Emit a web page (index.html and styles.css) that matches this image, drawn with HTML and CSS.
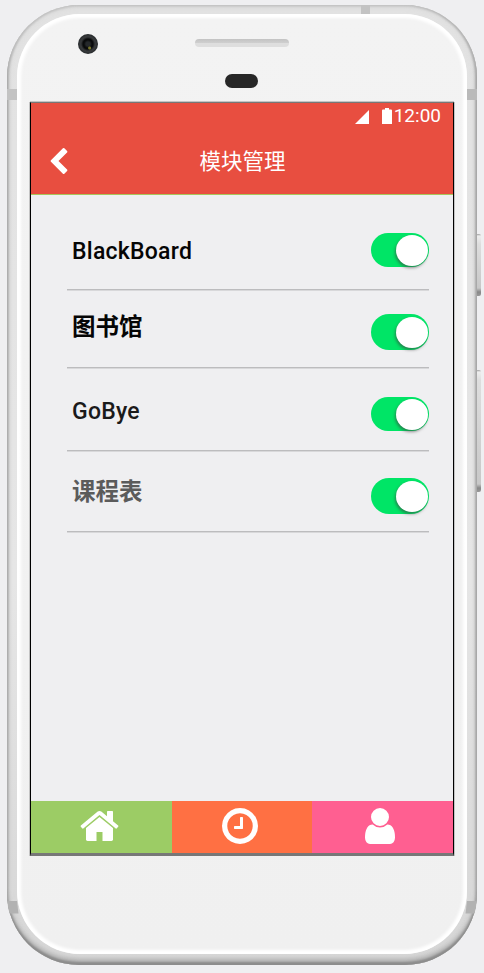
FILE: index.html
```html
<!DOCTYPE html>
<html lang="zh-CN">
<head>
<meta charset="utf-8">
<title>模块管理</title>
<link rel="stylesheet" href="styles.css">
</head>
<body>
<div class="phone">
  <span class="key power"></span>
  <span class="key volume"></span>
  <span class="seam seam-top"></span>
  <span class="seam seam-tl"></span>
  <span class="seam seam-tr"></span>
  <svg class="seam-low low-l" viewBox="0 0 12 13"><path d="M.500 0H10L11.500 12.500H2.500Q.500 6 .500 0Z"/></svg>
  <svg class="seam-low low-r" viewBox="0 0 12 13"><path d="M11.500 0H2L.5 12.500H9.500Q11.500 6 11.500 0Z"/></svg>
  <div class="face">
    <div class="forehead">
      <span class="camera"></span>
      <span class="speaker"></span>
      <span class="sensor"></span>
    </div>
    <div class="screen">
      <header>
        <div class="status">
          <svg class="signal" viewBox="0 0 14 14"><path d="M14 0V14H0Z"/></svg>
          <svg class="battery" viewBox="0 0 10 16"><path d="M3 0H7V1.500H9Q10 1.500 10 2.500V16H0V2.500Q0 1.500 1 1.500H3Z"/></svg>
          <span>12:00</span>
        </div>
        <div class="titlebar">
          <svg class="back" viewBox="154 26 1036 1612"><path d="M1171 301L640 832l531 531q19 19 19 45t-19 45l-166 166q-19 19-45 19t-45-19L173 877q-19-19-19-45t19-45L915 45q19-19 45-19t45 19l166 166q19 19 19 45t-19 45z"/></svg>
          <h1>模块管理</h1>
        </div>
      </header>
      <main>
        <div class="row r1"><span class="label">BlackBoard</span><span class="toggle"><i></i></span></div>
        <div class="row r2"><span class="label cjk">图书馆</span><span class="toggle tall"><i></i></span></div>
        <div class="row r3"><span class="label dark">GoBye</span><span class="toggle"><i></i></span></div>
        <div class="row r4"><span class="label cjk muted">课程表</span><span class="toggle tall"><i></i></span></div>
      </main>
      <nav>
        <a class="home"><svg viewBox="0 0 1664 1792"><path d="M1408 992v480q0 26-19 45t-45 19H960v-384H704v384H320q-26 0-45-19t-19-45V992q0-1 .5-3t.5-3l575-474 575 474q1 2 1 6zm223-69l-62 74q-8 9-21 11h-3q-13 0-21-7L832 424l-692 577q-12 8-24 7-13-2-21-11l-62-74q-8-10-7-23.500T37 878l719-599q32-26 76-26t76 26l244 204V288q0-14 9-23t23-9h192q14 0 23 9t9 23v408l219 182q10 8 11 21.500t-7 23.500z"/></svg></a>
        <a class="clock"><svg viewBox="0 0 1792 1792"><path d="M1024 544v448q0 14-9 23t-23 9H672q-14 0-23-9t-9-23v-64q0-14 9-23t23-9h224V544q0-14 9-23t23-9h64q14 0 23 9t9 23zm416 352q0-148-73-273t-198-198-273-73-273 73-198 198-73 273 73 273 198 198 273 73 273-73 198-198 73-273zm224 0q0 209-103 385.500T1281.500 1561 896 1664t-385.500-103T231 1281.500 128 896t103-385.500T510.500 231 896 128t385.500 103T1561 510.500 1664 896z"/></svg></a>
        <a class="user"><svg viewBox="0 0 1792 1792"><path d="M1536 1399q0 109-62.500 187t-150.500 78H469q-88 0-150.500-78T256 1399q0-85 8.500-160.500t31.500-152 58.500-131 94-89T583 832q131 128 313 128t313-128q76 0 134.500 34.500t94 89 58.500 131 31.500 152 8.500 160.500zm-256-887q0 159-112.500 271.500T896 896 624.500 783.500 512 512t112.500-271.500T896 128t271.500 112.500T1280 512z"/></svg></a>
      </nav>
    </div>
  </div>
</div>
</body>
</html>
```
FILE: styles.css
```css
* { box-sizing: border-box; }
html, body { height: 100%; overflow: hidden; }
body {
  margin: 0;
  padding: 5px 7px 8px;
  background: #efeff1;
  font-family: Roboto, "Noto Sans CJK SC", sans-serif;
}
svg { display: block; fill: #fff; }

.phone {
  position: relative;
  width: 470px;
  height: 960px;
  padding: 9px 10px 11px;
  border-radius: 72px;
  background: linear-gradient(#e2e2e2, #e6e6e6 60%, #d6d6d6);
  box-shadow:
    inset 0 -3px 2px #8c8c8c,
    inset 0 -6px 4px #b0b0b0,
    inset 2px 0 2px #c0c0c0,
    inset -2px 0 2px #b4b4b4,
    inset 0 2px 2px #cfcfcf,
    inset 0 0 6px 1px #d4d4d4;
}
.face {
  height: 940px;
  padding: 0 13px;
  border-radius: 63px;
  background: linear-gradient(#f3f3f3, #f0f0f0);
  box-shadow: inset 0 0 3px 4px #fff;
}

.key {
  position: absolute;
  left: 470px;
  width: 4px;
  background: linear-gradient(#a0a0a0, #eee 2px, #dedede 10px, #c8c8c8 calc(100% - 8px), #888 calc(100% - 4px), #999);
  border-radius: 0 2px 2px 0;
}
.power { top: 229px; height: 62px; }
.volume { top: 365px; height: 122px; }
.seam { position: absolute; background: #c3c3c3; }
.seam-top { left: 354px; top: 0; width: 9px; height: 9px; }
.seam-tl { left: 0; top: 84px; width: 10px; height: 11px; }
.seam-tr { right: 0; top: 84px; width: 10px; height: 11px; background: #bababa; }
.seam-low { position: absolute; top: 896px; width: 12px; height: 13px; fill: #b2b2b2; }
.low-l { left: 0; }
.low-r { right: 0; }

.forehead {
  display: grid;
  grid-template-columns: 165px 94px 1fr;
  grid-template-rows: 21px 18px 48px;
  padding-top: 1px;
  height: 88px;
}
.camera {
  grid-column: 1;
  grid-row: 1 / 3;
  width: 20px;
  height: 20px;
  margin: 19px 0 0 48px;
  border-radius: 50%;
  background: radial-gradient(circle at 58% 70%, #77752b 0 1px, transparent 2px), radial-gradient(circle, #25282b 0 2px, #090a0b 4px 5px, #36383a 7px 8px, #25282a 10px);
}
.speaker {
  grid-column: 2;
  grid-row: 2;
  align-self: start;
  height: 8px;
  margin-top: 3px;
  border-radius: 4px;
  background: linear-gradient(#c3c3c3, #cecece 45%, #dedede 55%, #dedede);
}
.sensor {
  grid-column: 2;
  grid-row: 3;
  width: 33px;
  height: 14px;
  margin: 20px 0 0 30px;
  border-radius: 7px;
  background: #272727;
}

.screen {
  display: flex;
  flex-direction: column;
  width: 424px;
  height: 754px;
  border: solid #000;
  border-width: 1px 1px 3px;
  border-top-color: #777;
  border-bottom-color: #777;
  background: #efeff1;
  box-shadow: -1px 0 0 #c4c4c4, 1px 0 0 #c4c4c4, 0 -1px 0 #c4c4c4;
}
header {
  height: 92px;
  color: #fff;
  background: #e84e40;
  border-bottom: 1px solid #a8c65b;
}
.status {
  display: flex;
  height: 26px;
  padding: 0 12px 0 0;
  justify-content: flex-end;
  align-items: center;
  font-size: 19px;
  line-height: 26px;
}
.signal { width: 14px; height: 14px; margin: 2px 13px 0 0; }
.battery { width: 10px; height: 16px; margin: 0 2px 0 0; }
.titlebar {
  display: grid;
  grid-template-columns: 19px 18px 1fr 37px;
  height: 64px;
  align-items: center;
}
.back { grid-column: 2; width: 18px; height: 26px; }
h1 {
  grid-column: 3;
  margin: -3px 0 0 1px;
  font: 400 21.500px/30px "Noto Sans CJK SC", sans-serif;
  text-align: center;
}

main { flex: 1; padding: 0 24px 0 36px; }
.row {
  display: flex;
  justify-content: space-between;
  align-items: flex-start;
  padding-left: 5px;
  border-bottom: 1px solid #bcbcbe;
  box-shadow: 0 1px 0 #d8d8da;
}
.r1 { height: 95px; padding-top: 38px; }
.r2 { height: 78px; padding-top: 24px; }
.r3 { height: 83px; padding-top: 29px; }
.r4 { height: 81px; padding-top: 27px; }
.label { margin-top: 1px; font-size: 23px; font-weight: 500; line-height: 36px; letter-spacing: .25px; color: #050505; }
.dark { color: #1a1a1a; margin-top: -3px; }
.cjk { font: 700 23.500px/36px "Noto Sans CJK SC", sans-serif; letter-spacing: 0; margin-top: -7px; }
.muted { color: #5b5b5b; margin-top: -6px; }
.toggle {
  display: flex;
  justify-content: flex-end;
  align-items: center;
  width: 58px;
  height: 34px;
  padding-right: 1px;
  border-radius: 18px;
  background: #00e566;
}
.toggle i {
  width: 32px;
  height: 31px;
  border-radius: 50%;
  background: #fff;
  box-shadow: -1px 2px 3px rgba(60, 60, 60, .55);
}
.tall { height: 36px; }

nav { display: grid; grid-template-columns: 141px 140px 141px; height: 52px; }
nav a { display: flex; justify-content: center; padding-top: 4px; }
nav svg { height: 42px; }
.home { background: #9ccc65; padding-right: 4px; }
.clock { background: #ff7043; padding-right: 5px; }
.user { background: #ff5f91; padding-right: 5px; }
```
